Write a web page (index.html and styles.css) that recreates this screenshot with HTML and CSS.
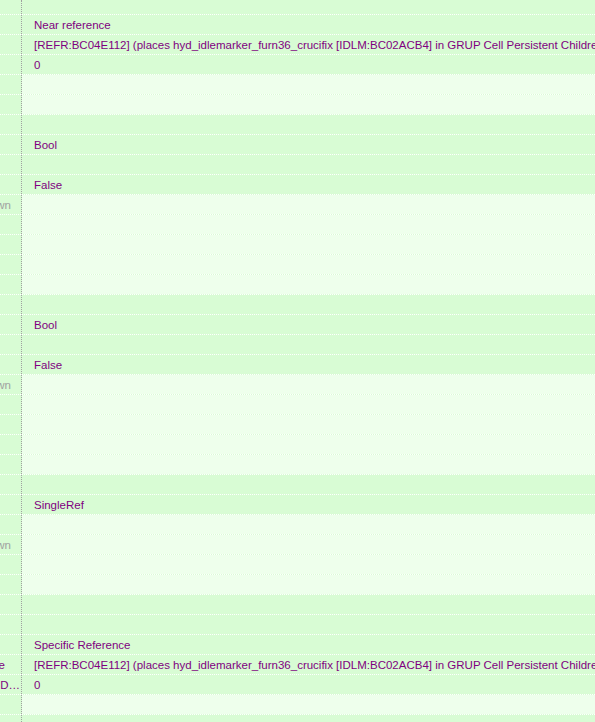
FILE: index.html
```html
<!DOCTYPE html>
<html lang="en">
<head>
    <meta charset="UTF-8">
    <title>Record View</title>
    <link rel="stylesheet" href="styles.css">
</head>
<body>
    <div class="tree">
        <div class="row row-top"><div class="lbl"></div><div class="val"></div></div>
        <div class="row"><div class="lbl"></div><div class="val">Near reference</div></div>
        <div class="row"><div class="lbl"></div><div class="val">[REFR:BC04E112] (places hyd_idlemarker_furn36_crucifix [IDLM:BC02ACB4] in GRUP Cell Persistent Children of [CELL:BC0095CE])</div></div>
        <div class="row"><div class="lbl"></div><div class="val">0</div></div>
        <div class="row light"><div class="lbl"></div><div class="val"></div></div>
        <div class="row light"><div class="lbl"></div><div class="val"></div></div>
        <div class="row"><div class="lbl"></div><div class="val"></div></div>
        <div class="row"><div class="lbl"></div><div class="val">Bool</div></div>
        <div class="row"><div class="lbl"></div><div class="val"></div></div>
        <div class="row"><div class="lbl"></div><div class="val">False</div></div>
        <div class="row light"><div class="lbl unused"><span class="tail-unk">Unknown</span></div><div class="val"></div></div>
        <div class="row light"><div class="lbl"></div><div class="val"></div></div>
        <div class="row light"><div class="lbl"></div><div class="val"></div></div>
        <div class="row light"><div class="lbl"></div><div class="val"></div></div>
        <div class="row light"><div class="lbl"></div><div class="val"></div></div>
        <div class="row"><div class="lbl"></div><div class="val"></div></div>
        <div class="row"><div class="lbl"></div><div class="val">Bool</div></div>
        <div class="row"><div class="lbl"></div><div class="val"></div></div>
        <div class="row"><div class="lbl"></div><div class="val">False</div></div>
        <div class="row light"><div class="lbl unused"><span class="tail-unk">Unknown</span></div><div class="val"></div></div>
        <div class="row light"><div class="lbl"></div><div class="val"></div></div>
        <div class="row light"><div class="lbl"></div><div class="val"></div></div>
        <div class="row light"><div class="lbl"></div><div class="val"></div></div>
        <div class="row light"><div class="lbl"></div><div class="val"></div></div>
        <div class="row"><div class="lbl"></div><div class="val"></div></div>
        <div class="row"><div class="lbl"></div><div class="val">SingleRef</div></div>
        <div class="row light"><div class="lbl"></div><div class="val"></div></div>
        <div class="row light"><div class="lbl unused"><span class="tail-unk">Unknown</span></div><div class="val"></div></div>
        <div class="row light"><div class="lbl"></div><div class="val"></div></div>
        <div class="row light"><div class="lbl"></div><div class="val"></div></div>
        <div class="row"><div class="lbl"></div><div class="val"></div></div>
        <div class="row"><div class="lbl"></div><div class="val"></div></div>
        <div class="row"><div class="lbl"></div><div class="val">Specific Reference</div></div>
        <div class="row"><div class="lbl"><span class="tail-ref">Reference</span></div><div class="val">[REFR:BC04E112] (places hyd_idlemarker_furn36_crucifix [IDLM:BC02ACB4] in GRUP Cell Persistent Children of [CELL:BC0095CE])</div></div>
        <div class="row"><div class="lbl"><span class="tail-cut">Package Data Input D&hellip;</span></div><div class="val">0</div></div>
        <div class="row light"><div class="lbl"></div><div class="val"></div></div>
        <div class="row"><div class="lbl"></div><div class="val"></div></div>
    </div>
</body>
</html>
```

FILE: styles.css
```css
body {
    margin: 0;
    font-family: "Liberation Sans", Arial, sans-serif;
    font-size: 11.5px;
    color: #800080;
    background-color: #d8fcd4;
    overflow: hidden;
}
.tree {
    width: 100%;
}
.row {
    display: grid;
    grid-template-columns: 22px 1fr;
    height: 20px;
    border-bottom: 1px dotted #ffffff;
    box-sizing: border-box;
    background-color: #d8fcd4;
}
.row-top {
    height: 15px;
}
.lbl {
    display: flex;
    justify-content: flex-end;
    overflow: hidden;
    white-space: nowrap;
    line-height: 20px;
    border-right: 1px dotted #a0a0a0;
}
.lbl.unused {
    color: #a0a0a0;
}
.tail-unk {
    padding-right: 10px;
}
.tail-ref {
    padding-right: 16px;
}
.tail-cut {
    padding-right: 1px;
}
.val {
    padding-left: 12px;
    white-space: nowrap;
    overflow: hidden;
    line-height: 20px;
}
.row.light .val {
    background-color: #eeffec;
}
```
